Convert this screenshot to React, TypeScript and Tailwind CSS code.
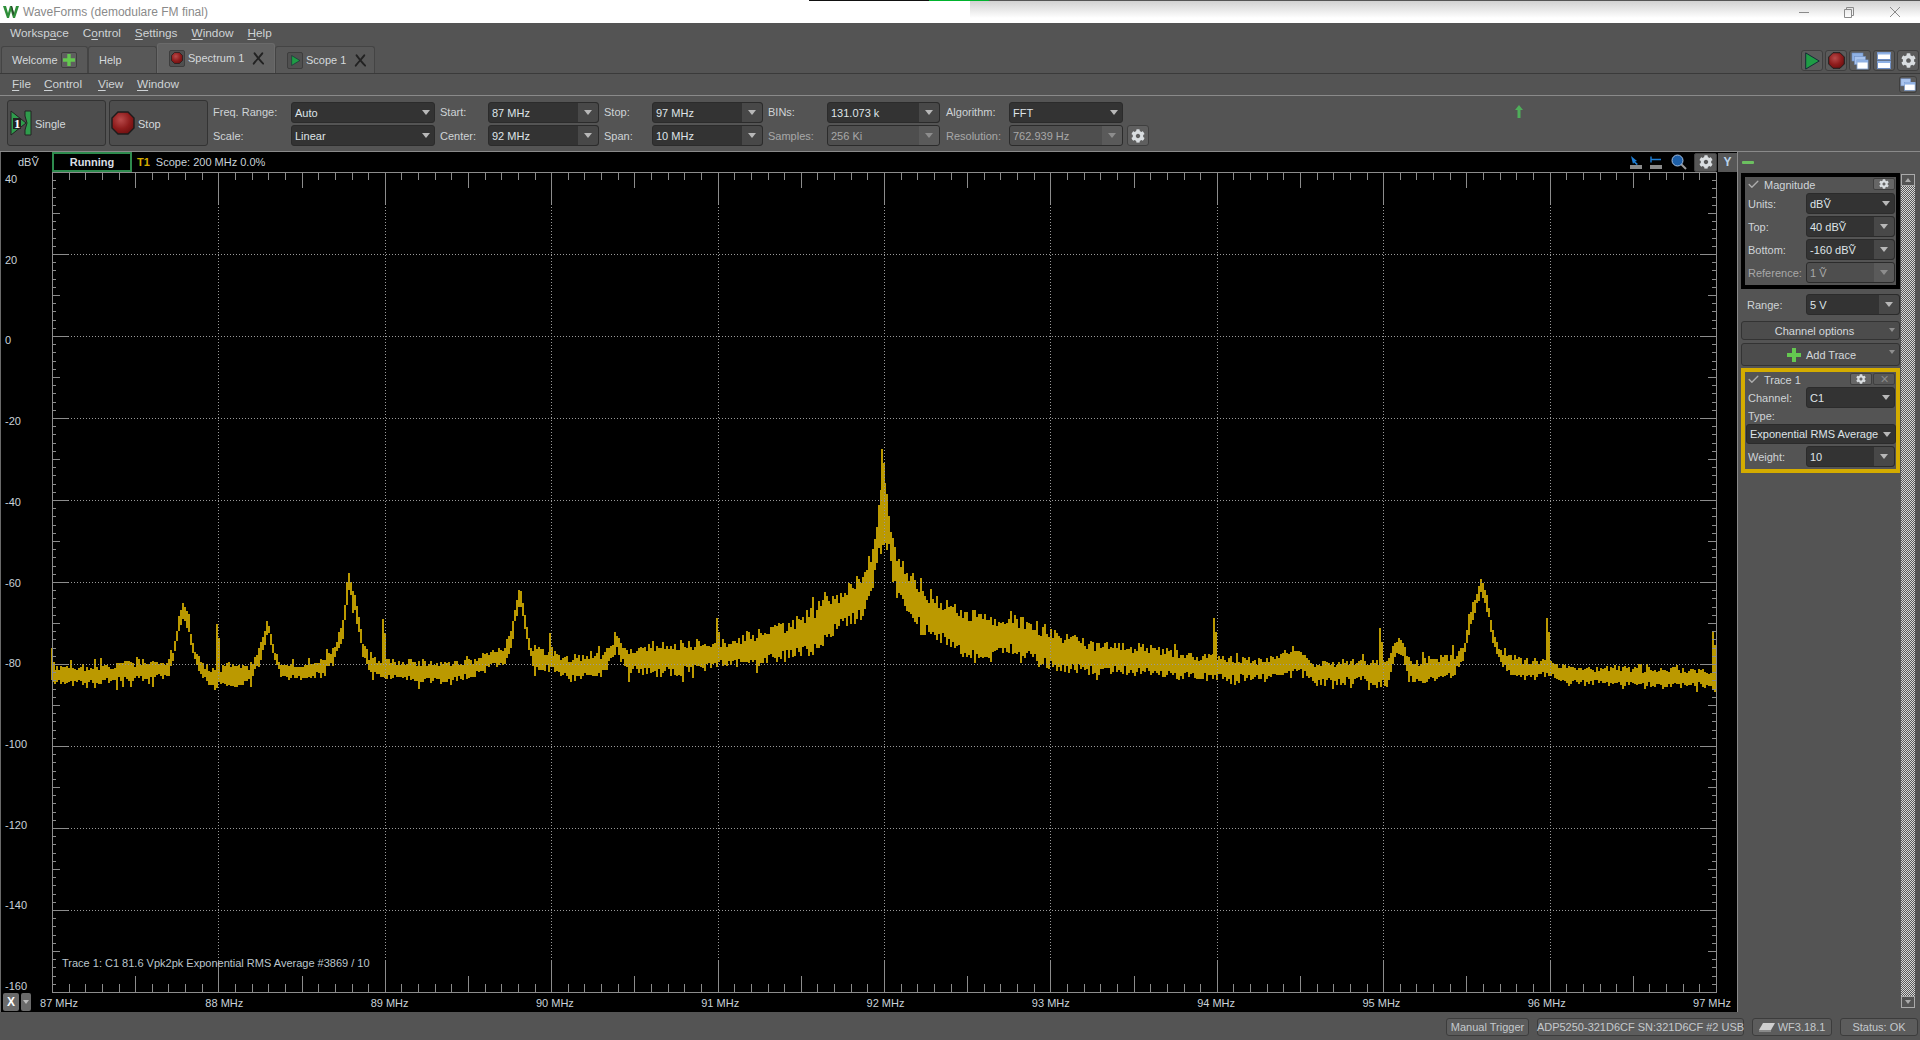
import React from "react";
import { FaCog } from "react-icons/fa";
import { Check } from "lucide-react";

const PLOT_L = 52;
const PLOT_R = 1716;
const PLOT_T = 172;
const PLOT_B = 992;

// x, top of band, bottom of band, read off the reference
const BAND: [number, number, number][] = [
  [52, 664, 686], [80, 665, 686], [165, 660, 679], [173, 648, 660], [177, 618, 640], [183, 600, 620], [188, 618, 635],
  [193, 648, 660], [203, 663, 682], [213, 668, 688], [232, 660, 688], [247, 666, 684], [255, 655, 672], [260, 640, 660],
  [267, 618, 632], [273, 648, 660], [280, 663, 677], [300, 663, 682], [323, 658, 674], [333, 645, 662], [342, 620, 640],
  [348, 570, 590], [355, 600, 620], [362, 640, 655], [368, 656, 672], [380, 658, 680], [440, 660, 684], [473, 658, 679],
  [487, 650, 670], [503, 646, 667], [510, 630, 650], [515, 600, 620], [519, 580, 605], [523, 610, 625], [530, 645, 660],
  [533, 644, 670], [550, 650, 672], [567, 656, 682], [603, 652, 677], [611, 642, 660], [617, 633, 650], [622, 642, 662],
  [627, 648, 674], [653, 643, 677], [687, 638, 677], [710, 640, 670], [727, 638, 667], [753, 630, 667], [787, 620, 662],
  [813, 603, 657], [840, 590, 630], [860, 568, 622], [873, 545, 587], [878, 497, 553], [882, 449, 550], [885, 467, 557],
  [888, 507, 547], [893, 545, 592], [900, 555, 612], [913, 571, 625], [930, 588, 645], [947, 601, 649], [980, 611, 669],
  [1013, 615, 654], [1047, 625, 672], [1080, 641, 675], [1100, 640, 677], [1140, 643, 677], [1200, 653, 680], [1260, 658, 682],
  [1285, 653, 674], [1297, 645, 672], [1313, 660, 687], [1361, 658, 684], [1387, 658, 690], [1392, 645, 665], [1397, 635, 655],
  [1402, 640, 660], [1407, 653, 682], [1413, 658, 687], [1453, 653, 677], [1463, 645, 660], [1471, 605, 625], [1480, 578, 595],
  [1486, 590, 610], [1491, 625, 640], [1498, 648, 660], [1505, 653, 672], [1526, 658, 682], [1546, 658, 677], [1562, 666, 684],
  [1622, 666, 687], [1702, 668, 688], [1714, 668, 690],
];

const SPIKES: [number, number, number][] = [
  [52, 648, 680], [217, 624, 672], [383, 619, 668], [550, 633, 660], [717, 618, 650], [882, 449, 545], [1214, 618, 670],
  [1380, 628, 670], [1547, 618, 668], [1713, 631, 680],
];

function buildTrace() {
  let seed = 4711;
  const rnd = () => {
    seed = (seed * 16807) % 2147483647;
    return seed / 2147483647;
  };
  let d = "";
  let i = 0;
  for (let x = PLOT_L; x <= 1714; x += 2) {
    while (i < BAND.length - 2 && BAND[i + 1][0] <= x) i++;
    const [x0, t0, b0] = BAND[i];
    const [x1, t1, b1] = BAND[i + 1];
    const k = (x - x0) / (x1 - x0);
    const t = t0 + (t1 - t0) * k;
    const b = b0 + (b1 - b0) * k;
    const h = b - t;
    let top = t + rnd() * h * 0.3;
    let bot = b - rnd() * h * 0.3;
    if (h > 14) {
      if (rnd() < 0.16) top -= rnd() * 9;
      if (rnd() < 0.16) bot += rnd() * 9;
    }
    d += `M${x + 1} ${Math.round(top)}V${Math.round(bot)}`;
  }
  return d;
}

function buildTicks() {
  let d = "";
  for (let n = 1; n < 100; n++) {
    const x = Math.round(PLOT_L + (n * (PLOT_R - PLOT_L)) / 100) + 0.5;
    if (n % 10 === 0) continue;
    const len = n % 5 === 0 ? 16 : 8;
    d += `M${x} ${PLOT_T}v${len}M${x} ${PLOT_B}v${-len}`;
  }
  for (let n = 1; n < 100; n++) {
    const y = Math.round(PLOT_T + (n * (PLOT_B - PLOT_T)) / 100) + 0.5;
    if (n % 10 === 0) continue;
    const len = n % 5 === 0 ? 8 : 4;
    d += `M${PLOT_L} ${y}h${len}M${PLOT_R} ${y}h${-len}`;
  }
  return d;
}

const TRACE = buildTrace();
const TICKS = buildTicks();
const DIVS = [1, 2, 3, 4, 5, 6, 7, 8, 9];

const yLabels = ["40", "20", "0", "-20", "-40", "-60", "-80", "-100", "-120", "-140", "-160"];
const xLabels = ["87 MHz", "88 MHz", "89 MHz", "90 MHz", "91 MHz", "92 MHz", "93 MHz", "94 MHz", "95 MHz", "96 MHz", "97 MHz"];

const Mn = ({ a = "", u, b = "" }: { a?: string; u: string; b?: string }) => (
  <span>
    {a}
    <span className="underline underline-offset-2">{u}</span>
    {b}
  </span>
);

const Arrow = ({ dim }: { dim?: boolean }) => (
  <span className={`h-0 w-0 border-x-[4px] border-t-[5px] border-x-transparent ${dim ? "border-t-[#8d8d8d]" : "border-t-[#b8b8b8]"}`} />
);

const Combo = ({
  text,
  w,
  split,
  off,
  h = "h-[21px]",
}: {
  text: string;
  w: string;
  split?: boolean;
  off?: boolean;
  h?: string;
}) => (
  <div
    className={`flex ${h} ${w} shrink-0 items-center rounded-[3px] border border-[#2b2b2b] ${
      off ? "bg-[#4e4e4e] text-[#a8a8a8]" : "bg-[#333333] text-[#dfe4e8]"
    }`}
  >
    <span className="flex-1 overflow-hidden whitespace-nowrap pl-[3px] pt-px">{text}</span>
    {split ? (
      <span className={`flex h-full w-[20px] shrink-0 items-center justify-center rounded-r-[3px] ${off ? "bg-[#5a5a5a]" : "bg-[#484848]"}`}>
        <Arrow dim={off} />
      </span>
    ) : (
      <span className="flex w-[16px] shrink-0 justify-center">
        <Arrow />
      </span>
    )}
  </div>
);

const Labels = ({ a, b, w, dim }: { a: string; b: string; w: string; dim?: boolean }) => (
  <div className={`flex ${w} shrink-0 flex-col gap-[7px] pt-[8px] leading-[17px] text-[#cfd3d6]`}>
    <span>{a}</span>
    <span className={dim ? "text-[#a8a8a8]" : ""}>{b}</span>
  </div>
);

const Combos = ({ children }: { children: React.ReactNode }) => <div className="flex flex-col gap-[2px] pt-[6px]">{children}</div>;

const Octagon = ({ size, id }: { size: number; id: string }) => (
  <svg width={size} height={size} viewBox="0 0 24 24">
    <defs>
      <radialGradient id={id} cx="40%" cy="35%" r="70%">
        <stop offset="0%" stopColor="#b84a4a" />
        <stop offset="60%" stopColor="#8e1c1c" />
        <stop offset="100%" stopColor="#6d1010" />
      </radialGradient>
    </defs>
    <polygon points="7,1 17,1 23,7 23,17 17,23 7,23 1,17 1,7" fill={`url(#${id})`} stroke="#1c1c1c" strokeWidth="1.4" />
  </svg>
);

const Tri = ({ size }: { size: number }) => (
  <svg width={size} height={size} viewBox="0 0 20 20">
    <polygon points="3,1 18,10 3,19" fill="#1f9c45" stroke="#123" strokeWidth="1" />
  </svg>
);

const Plus = ({ size }: { size: number }) => (
  <svg width={size} height={size} viewBox="0 0 14 14">
    <path d="M5 0h4v5h5v4H9v5H5V9H0V5h5z" fill="#64c850" />
  </svg>
);

const TabX = () => (
  <svg width="12" height="13" viewBox="0 0 14 14" fill="none" stroke="#222222" strokeWidth="2.2" strokeLinecap="round">
    <path d="M2 13 C5 9 9 5 12 1" />
    <path d="M3 1 C6 5 9 9 13 13" />
  </svg>
);

const Windows = ({ three }: { three?: boolean }) => (
  <svg width="18" height="18" viewBox="0 0 18 18">
    {three && <rect x="1" y="1" width="11" height="8" fill="#8fb1e4" stroke="#6f8fc4" strokeWidth="0.6" />}
    <rect x={three ? 3.5 : 1} y={three ? 4.5 : 2} width="11" height="8" fill="#a9c4ee" stroke="#6f8fc4" strokeWidth="0.6" />
    <rect x={three ? 6 : 5} y={three ? 8 : 6} width={three ? 11 : 12} height="9" fill="#ffffff" stroke="#7799cc" strokeWidth="0.8" />
    <rect x={three ? 6 : 5} y={three ? 8 : 6} width={three ? 11 : 12} height="2.5" fill="#8fb1e4" />
  </svg>
);

const Split = () => (
  <svg width="14" height="17" viewBox="0 0 14 17">
    <rect x="0.5" y="0.5" width="13" height="7" fill="#ffffff" stroke="#6f8fc4" />
    <rect x="0.5" y="0.5" width="13" height="2" fill="#8fb1e4" />
    <rect x="0.5" y="9" width="13" height="7.5" fill="#ffffff" stroke="#6f8fc4" />
    <rect x="0.5" y="9" width="13" height="2" fill="#8fb1e4" />
  </svg>
);

const TopBtn = ({ children }: { children: React.ReactNode }) => (
  <div className="flex h-[21px] w-[22px] items-center justify-center rounded-[3px] border border-[#3f3f3f] bg-[#5b5b5b]">{children}</div>
);

const Gear = ({ size = 14 }: { size?: number }) => <FaCog size={size} color="#d9dde0" />;

const SmallBtn = ({ children, dim }: { children: React.ReactNode; dim?: boolean }) => (
  <div className={`flex h-[12px] w-[22px] items-center justify-center rounded-[2px] border border-[#3f3f3f] ${dim ? "bg-[#585858]" : "bg-[#666666]"}`}>
    {children}
  </div>
);

const WideBtn = ({ h, pad, children }: { h: string; pad: string; children: React.ReactNode }) => (
  <div className={`relative flex ${h} ${pad} items-center justify-center gap-[5px] rounded-[3px] border border-[#333333] bg-[#4c4c4c] pt-px text-[#d5d9dc]`}>
    {children}
    <span className="absolute right-[4px] top-[6px]">
      <span className="block h-0 w-0 border-x-[3px] border-t-[4px] border-x-transparent border-t-[#8f8f8f]" />
    </span>
  </div>
);

const Row = ({ label, dim, children }: { label: string; dim?: boolean; children: React.ReactNode }) => (
  <div className="flex items-center">
    <span className={`w-[61px] shrink-0 pl-[3px] pt-px ${dim ? "text-[#a8a8a8]" : "text-[#cfd3d6]"}`}>{label}</span>
    {children}
  </div>
);

const GroupHead = ({ title, children }: { title: string; children: React.ReactNode }) => (
  <div className="flex h-[14px] items-center">
    <Check size={13} strokeWidth={2.5} color="#adadad" className="ml-[2px]" />
    <span className="ml-[4px] flex-1 pt-[2px] text-[#d0d5d9]">{title}</span>
    <div className="flex gap-[1px]">{children}</div>
  </div>
);

const Status = ({ w, ml, children }: { w: string; ml: string; children: React.ReactNode }) => (
  <div className={`flex h-[18px] ${w} ${ml} items-center justify-center gap-[3px] whitespace-nowrap rounded-[3px] border border-[#3c3c3c] bg-[#5c5c5c] text-[#c5c9cc]`}>
    {children}
  </div>
);

const Chart = () => (
  <svg className="absolute inset-0" width="1737" height="860" viewBox="0 152 1737 860">
    <path d="M0.5 152V1012" stroke="#6a6a6a" shapeRendering="crispEdges" />
    <path d={TRACE} stroke="#bb9900" strokeWidth="2" shapeRendering="crispEdges" fill="none" />
    {SPIKES.map(([x, top, bot]) => (
      <path key={x} d={`M${x} ${top}V${bot}M${x + 2} ${top + 14}V${bot}`} stroke="#bb9900" strokeWidth="2" shapeRendering="crispEdges" />
    ))}
    <g stroke="#8c8c8c" fill="none" shapeRendering="crispEdges">
      <rect x={PLOT_L + 0.5} y={PLOT_T + 0.5} width={PLOT_R - PLOT_L} height={PLOT_B - PLOT_T} />
      <path d={TICKS} />
      {DIVS.map((n) => {
        const x = Math.round(PLOT_L + n * 166.4) + 0.5;
        const y = Math.round(PLOT_T + n * 82) + 0.5;
        return (
          <g key={n}>
            <path d={`M${x} ${PLOT_T}v32M${x} ${PLOT_B}v-32M${PLOT_L} ${y}h16M${PLOT_R} ${y}h-16`} />
            <path d={`M${x} ${PLOT_T + 32}V${PLOT_B - 32}M${PLOT_L + 16} ${y}H${PLOT_R - 16}`} strokeDasharray="1 2" stroke="#9a9a9a" />
          </g>
        );
      })}
    </g>
  </svg>
);

export default function App() {
  return (
    <div className="flex h-[1040px] w-[1920px] flex-col overflow-hidden bg-[#545454] [font-family:'Liberation_Sans',sans-serif] text-[11px] text-[#d5d9dc]">
      {/* title bar */}
      <div className="relative flex h-[23px] shrink-0 items-center bg-white">
        <div className="absolute left-[970px] right-0 top-0 h-[18px] bg-gradient-to-b from-[#cfcfcf] to-white" />
        <div className="absolute left-0 right-0 top-0 flex h-px">
          <span className="ml-[809px] w-[120px] bg-[#111111]" />
          <span className="w-[60px] bg-[#00b32d]" />
          <span className="flex-1 bg-[#555555]" />
        </div>
        <svg className="relative ml-[3px]" width="16" height="14" viewBox="0 0 16 14">
          <path d="M0 1h3l2 7 2-7h2l2 7 2-7h3l-4 12h-2L8 6l-2 7H4z" fill="#2f8f3a" />
          <path d="M8 1h1l2 7-1 3z" fill="#2a3f2a" />
        </svg>
        <span className="relative ml-[4px] text-[12px] text-[#8a8a8a]">WaveForms (demodulare FM final)</span>
        <svg width="121" height="14" viewBox="0 0 121 14" fill="none" stroke="#8a8a8a" strokeWidth="1" className="relative ml-auto">
          <path d="M0 7.5h10" />
          <path d="M45.5 4.5h7v8h-7zM47.5 4.5v-2h7v8h-2" />
          <path d="M91 2l10 10M101 2L91 12" />
        </svg>
      </div>

      {/* workspace menu */}
      <div className="flex h-[22px] shrink-0 items-center gap-[14px] pl-[10px] text-[11.8px] text-[#cfd3d6]">
        <Mn a="Worksp" u="a" b="ce" />
        <Mn a="C" u="o" b="ntrol" />
        <Mn u="S" b="ettings" />
        <Mn u="W" b="indow" />
        <Mn u="H" b="elp" />
      </div>

      {/* tabs */}
      <div className="flex h-[29px] shrink-0 items-end border-b border-[#3a3a3a] pl-px">
        <div className="flex h-[27px] w-[87px] items-center gap-[3px] rounded-t-[3px] border border-b-0 border-[#444444] bg-[#585858] pl-[10px]">
          <span>Welcome</span>
          <span className="flex h-[16px] w-[16px] items-center justify-center rounded-[2px] border border-[#3d3d3d] bg-[#5f5f5f]">
            <Plus size={12} />
          </span>
        </div>
        <div className="flex h-[27px] w-[69px] items-center rounded-t-[3px] border border-b-0 border-[#444444] bg-[#585858] pl-[10px]">Help</div>
        <div className="flex h-[30px] w-[118px] items-center gap-[3px] rounded-t-[3px] border border-b-0 border-[#6a6a6a] bg-[#626262] pb-px pl-[11px]">
          <span className="flex h-[17px] w-[16px] items-center justify-center rounded-[2px] border border-[#3d3d3d] bg-[#505050]">
            <Octagon size={12} id="tabstop" />
          </span>
          <span>Spectrum 1</span>
          <span className="ml-[5px]"><TabX /></span>
        </div>
        <div className="flex h-[27px] w-[100px] items-center gap-[3px] rounded-t-[3px] border border-b-0 border-[#444444] bg-[#585858] pl-[11px]">
          <span className="flex h-[17px] w-[16px] items-center justify-center rounded-[2px] border border-[#3d3d3d] bg-[#505050]">
            <Tri size={11} />
          </span>
          <span>Scope 1</span>
          <span className="ml-[5px]"><TabX /></span>
        </div>
        <div className="ml-auto flex gap-[2px] self-start pt-[5px] pr-px">
          <TopBtn><Tri size={18} /></TopBtn>
          <TopBtn><Octagon size={17} id="topstop" /></TopBtn>
          <TopBtn><Windows three /></TopBtn>
          <TopBtn><Split /></TopBtn>
          <TopBtn><Gear size={15} /></TopBtn>
        </div>
      </div>

      {/* instrument menu */}
      <div className="flex h-[22px] shrink-0 items-center border-b border-[#8a8a8a] pl-[12px] text-[11.8px] text-[#cfd3d6]">
        <span className="w-[32px]"><Mn u="F" b="ile" /></span>
        <span className="w-[54px]"><Mn u="C" b="ontrol" /></span>
        <span className="w-[39px]"><Mn u="V" b="iew" /></span>
        <Mn u="W" b="indow" />
        <span className="ml-auto mr-[3px] flex h-[17px] w-[18px] items-center justify-center rounded-[3px] border border-[#3f3f3f] bg-[#5b5b5b]">
          <Windows />
        </span>
      </div>

      {/* toolbar */}
      <div className="relative flex h-[56px] shrink-0 border-b border-[#8a8a8a] pl-[7px] leading-none">
        <div className="mt-[4px] flex h-[46px] w-[99px] items-center gap-[3px] rounded-[3px] border border-[#333333] bg-[#4d4d4d] pl-[2px]">
          <svg width="22" height="26" viewBox="0 0 22 26">
            <polygon points="1,1 16,13 1,25" fill="#2f9c4c" stroke="#222222" strokeWidth="1" />
            <path d="M15 1h6v24h-6v-5l2-7-2-7z" fill="#2f9c4c" stroke="#222222" strokeWidth="1" />
            <rect x="3" y="8" width="8" height="11" fill="#222222" />
            <text x="4" y="18" fontSize="13" fontWeight="700" fill="#ffffff" fontFamily="Liberation Serif, serif">1</text>
          </svg>
          <span className="pt-[2px] text-[#d5d9dc]">Single</span>
        </div>
        <div className="ml-[3px] mt-[4px] flex h-[46px] w-[99px] items-center gap-[3px] rounded-[3px] border border-[#333333] bg-[#4d4d4d] pl-[1px]">
          <Octagon size={24} id="bigstop" />
          <span className="pt-[2px] text-[#d5d9dc]">Stop</span>
        </div>
        <div className="ml-[5px]"><Labels a="Freq. Range:" b="Scale:" w="w-[78px]" /></div>
        <Combos>
          <Combo text="Auto" w="w-[144px]" />
          <Combo text="Linear" w="w-[144px]" />
        </Combos>
        <div className="ml-[5px]"><Labels a="Start:" b="Center:" w="w-[48px]" /></div>
        <Combos>
          <Combo text="87 MHz" w="w-[111px]" split />
          <Combo text="92 MHz" w="w-[111px]" split />
        </Combos>
        <div className="ml-[5px]"><Labels a="Stop:" b="Span:" w="w-[48px]" /></div>
        <Combos>
          <Combo text="97 MHz" w="w-[111px]" split />
          <Combo text="10 MHz" w="w-[111px]" split />
        </Combos>
        <div className="ml-[5px]"><Labels a="BINs:" b="Samples:" w="w-[59px]" dim /></div>
        <Combos>
          <Combo text="131.073 k" w="w-[113px]" split />
          <Combo text="256 Ki" w="w-[113px]" split off />
        </Combos>
        <div className="ml-[6px]"><Labels a="Algorithm:" b="Resolution:" w="w-[63px]" dim /></div>
        <Combos>
          <Combo text="FFT" w="w-[114px]" />
          <Combo text="762.939 Hz" w="w-[114px]" split off />
        </Combos>
        <div className="ml-[4px] mt-[29px] flex h-[21px] w-[22px] items-center justify-center rounded-[3px] border border-[#3f3f3f] bg-[#5f5f5f]">
          <Gear size={14} />
        </div>
        <svg className="ml-[366px] mt-[9px]" width="8" height="13" viewBox="0 0 8 13">
          <path d="M4 0l4 5H5.5v8h-3V5H0z" fill="#4fae5a" />
        </svg>
      </div>

      {/* main */}
      <div className="flex min-h-0 flex-1">
        <div className="relative w-[1737px] shrink-0 bg-black leading-none text-[#c9d2d9]">
          <Chart />
          <div className="relative flex h-[20px] items-center">
            <span className="w-[52px] pl-[18px] text-[#c9d2d9]">dBṼ</span>
            <div className="flex h-[20px] w-[80px] items-center justify-center border-2 border-[#2e8b4e] font-bold text-[#d8dee3]">Running</div>
            <span className="ml-[5px] font-bold text-[#d4ac00]">T1</span>
            <span className="ml-[6px]">Scope: 200 MHz 0.0%</span>
            <div className="ml-auto flex items-center">
              <svg width="32" height="14" viewBox="0 0 32 14" className="mr-[9px]">
                <path d="M1 1l6 5-2 .5L8 9 6.5 10 4 7.5 3 9z" fill="#1f7fd6" />
                <rect x="0" y="10" width="12" height="4" fill="#8a8a8a" />
                <path d="M21 1.5v6M21 4.5h10" stroke="#1f7fd6" strokeWidth="1.4" fill="none" />
                <rect x="20" y="10" width="12" height="4" fill="#8a8a8a" />
              </svg>
              <svg width="16" height="16" viewBox="0 0 16 16" className="mr-[7px]">
                <path d="M10 10l5 5" stroke="#9a9a9a" strokeWidth="2" />
                <circle cx="6.5" cy="6.5" r="5.5" fill="#1d5fa8" stroke="#a8c0e0" strokeWidth="1" />
              </svg>
              <div className="flex h-[19px] w-[23px] items-center justify-center rounded-[2px] border border-[#3f3f3f] bg-[#565656]">
                <Gear size={14} />
              </div>
              <div className="ml-px flex h-[19px] w-[19px] items-center justify-center bg-[#565656] text-[12px] font-bold text-[#b8d4ec]">Y</div>
            </div>
          </div>

          {yLabels.map((t, i) => (
            <span key={t} className="absolute left-[5px] -translate-y-1/2" style={{ top: 27 + i * 80.7 }}>
              {t}
            </span>
          ))}
          {xLabels.map((t, i) => (
            <span key={t} className="absolute top-[851px] -translate-x-1/2 -translate-y-1/2 whitespace-nowrap" style={{ left: 59 + i * 165.3 }}>
              {t}
            </span>
          ))}
          <span className="absolute left-[62px] top-[806px] whitespace-nowrap text-[#bcc6cd]">
            Trace 1: C1 81.6 Vpk2pk Exponential RMS Average #3869 / 10
          </span>
          <div className="absolute left-[3px] top-[841px] flex gap-[2px]">
            <div className="flex h-[18px] w-[16px] items-center justify-center rounded-[2px] bg-[#6a6a6a] text-[12px] font-bold text-white">X</div>
            <div className="flex h-[18px] w-[10px] items-center justify-center rounded-[2px] bg-[#6a6a6a]">
              <span className="h-0 w-0 border-x-[3px] border-t-[4px] border-x-transparent border-t-[#bbbbbb]" />
            </div>
          </div>
        </div>

        {/* side panel */}
        <div className="flex flex-1 border-l border-[#8a8a8a] pl-[3px] leading-none">
          <div className="flex w-[159px] shrink-0 flex-col">
            <div className="flex h-[21px] shrink-0 items-center pl-[1px]">
              <span className="h-[3px] w-[12px] rounded-[1px] bg-[#6cc060]" />
            </div>
            <div className="flex h-[116px] shrink-0 flex-col gap-[2px] border-4 border-black pr-px">
              <GroupHead title="Magnitude">
                <SmallBtn><Gear size={10} /></SmallBtn>
              </GroupHead>
              <Row label="Units:"><Combo text="dBṼ" w="w-[89px]" /></Row>
              <Row label="Top:"><Combo text="40 dBṼ" w="w-[89px]" split /></Row>
              <Row label="Bottom:"><Combo text="-160 dBṼ" w="w-[89px]" split /></Row>
              <Row label="Reference:" dim><Combo text="1 Ṽ" w="w-[89px]" split off /></Row>
            </div>
            <div className="mt-[5px] flex shrink-0 items-center">
              <span className="w-[65px] pl-[6px] pt-px text-[#cfd3d6]">Range:</span>
              <Combo text="5 V" w="w-[94px]" split />
            </div>
            <div className="mt-[6px] flex shrink-0 flex-col gap-[3px]">
              <WideBtn h="h-[19px]" pad="pr-[12px]">Channel options</WideBtn>
              <WideBtn h="h-[23px]" pad="pl-[2px]"><Plus size={14} /><span>Add Trace</span></WideBtn>
            </div>
            <div className="mt-[2px] flex h-[105px] shrink-0 flex-col border-4 border-[#d4ac00] pr-px">
              <GroupHead title="Trace 1">
                <SmallBtn><Gear size={10} /></SmallBtn>
                <SmallBtn dim><span className="text-[11px] leading-none text-[#8a8a8a]">✕</span></SmallBtn>
              </GroupHead>
              <div className="mt-[1px]"><Row label="Channel:"><Combo text="C1" w="w-[89px]" /></Row></div>
              <span className="mt-[3px] h-[13px] pl-[3px] text-[#cfd3d6]">Type:</span>
              <div className="pl-[1px]"><Combo text="Exponential RMS Average" w="w-[150px]" h="h-[20px]" /></div>
              <div className="mt-[2px]"><Row label="Weight:"><Combo text="10" w="w-[89px]" split /></Row></div>
            </div>
          </div>
          <div className="ml-px mt-[22px] mb-[4px] flex w-[14px] shrink-0 flex-col bg-[repeating-conic-gradient(#d8d8d8_0_25%,#5a5a5a_0_50%)] bg-[length:2px_2px]">
            <div className="flex h-[12px] items-center justify-center border border-[#aaaaaa] bg-[#545454]">
              <span className="h-0 w-0 border-x-[3px] border-b-[4px] border-x-transparent border-b-[#aaaaaa]" />
            </div>
            <div className="mt-auto flex h-[12px] items-center justify-center border border-[#aaaaaa] bg-[#545454]">
              <span className="h-0 w-0 border-x-[3px] border-t-[4px] border-x-transparent border-t-[#aaaaaa]" />
            </div>
          </div>
        </div>
      </div>

      {/* status bar */}
      <div className="flex h-[28px] shrink-0 items-center pl-[1446px] pt-[2px] leading-none">
        <Status w="w-[83px]" ml="ml-0">Manual Trigger</Status>
        <Status w="w-[207px]" ml="ml-[8px]">ADP5250-321D6CF SN:321D6CF #2 USB</Status>
        <Status w="w-[80px]" ml="ml-[8px]">
          <svg width="16" height="9" viewBox="0 0 16 9"><path d="M4 0h12l-4 7H0z" fill="#cfcfcf" /><path d="M0 7h12v2H0z" fill="#8a8a8a" /></svg>
          <span>WF3.18.1</span>
        </Status>
        <Status w="w-[78px]" ml="ml-[8px]">Status: OK</Status>
      </div>
    </div>
  );
}
